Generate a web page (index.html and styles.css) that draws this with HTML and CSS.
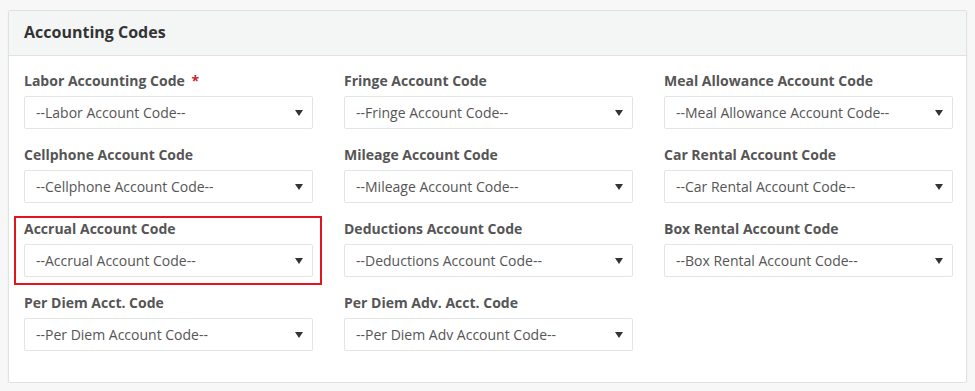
FILE: index.html
```html
<!DOCTYPE html>
<html lang="en">
<head>
    <meta charset="UTF-8">
    <meta name="viewport" content="width=device-width, initial-scale=1.0">
    <title>Accounting Codes</title>
    <link rel="stylesheet" href="styles.css">
</head>
<body>
    <div class="panel">
        <div class="panel-heading">
            <h3 class="panel-title">Accounting Codes</h3>
        </div>
        <div class="panel-body">
            <div class="form-grid">
                <div class="form-group">
                    <label>Labor Accounting Code <span class="required">*</span></label>
                    <div class="select-box"><select><option>--Labor Account Code--</option></select></div>
                </div>
                <div class="form-group">
                    <label>Fringe Account Code</label>
                    <div class="select-box"><select><option>--Fringe Account Code--</option></select></div>
                </div>
                <div class="form-group">
                    <label>Meal Allowance Account Code</label>
                    <div class="select-box"><select><option>--Meal Allowance Account Code--</option></select></div>
                </div>

                <div class="form-group">
                    <label>Cellphone Account Code</label>
                    <div class="select-box"><select><option>--Cellphone Account Code--</option></select></div>
                </div>
                <div class="form-group">
                    <label>Mileage Account Code</label>
                    <div class="select-box"><select><option>--Mileage Account Code--</option></select></div>
                </div>
                <div class="form-group">
                    <label>Car Rental Account Code</label>
                    <div class="select-box"><select><option>--Car Rental Account Code--</option></select></div>
                </div>

                <div class="form-group highlighted">
                    <label>Accrual Account Code</label>
                    <div class="select-box"><select><option>--Accrual Account Code--</option></select></div>
                </div>
                <div class="form-group">
                    <label>Deductions Account Code</label>
                    <div class="select-box"><select><option>--Deductions Account Code--</option></select></div>
                </div>
                <div class="form-group">
                    <label>Box Rental Account Code</label>
                    <div class="select-box"><select><option>--Box Rental Account Code--</option></select></div>
                </div>

                <div class="form-group">
                    <label>Per Diem Acct. Code</label>
                    <div class="select-box"><select><option>--Per Diem Account Code--</option></select></div>
                </div>
                <div class="form-group">
                    <label>Per Diem Adv. Acct. Code</label>
                    <div class="select-box"><select><option>--Per Diem Adv Account Code--</option></select></div>
                </div>
            </div>
        </div>
    </div>
</body>
</html>
```

FILE: styles.css
```css
body {
    font-family: 'Open Sans', 'Liberation Sans', sans-serif;
    margin: 0;
    padding: 10px 8px 0 8px;
    background-color: #f7f7f7;
    color: #555;
}
.panel {
    width: 959px;
    background-color: white;
    border: 1px solid #dde3e3;
    border-radius: 2px;
    box-shadow: 0 1px 2px rgba(0, 0, 0, 0.06);
    box-sizing: border-box;
}
.panel-heading {
    background-color: #f4f6f6;
    border-bottom: 1px solid #dde3e3;
    padding: 11px 15px 12px 15px;
    height: 45px;
    box-sizing: border-box;
}
.panel-title {
    margin: 0;
    font-size: 16px;
    font-weight: 700;
    line-height: 20px;
    color: #333;
}
.panel-body {
    padding: 15px 15px 15px 15px;
}
.form-grid {
    display: grid;
    grid-template-columns: repeat(3, 289px);
    column-gap: 31px;
}
.form-group {
    margin-bottom: 16px;
}
.form-group label {
    display: block;
    font-size: 14px;
    font-weight: 700;
    line-height: 20px;
    margin-bottom: 5px;
    color: #555;
}
.required {
    color: #c0282d;
    margin-left: 3px;
}
.select-box {
    position: relative;
}
.select-box select {
    width: 100%;
    height: 33px;
    padding: 0 30px 0 11px;
    font-family: 'Open Sans', 'Liberation Sans', sans-serif;
    font-size: 14px;
    color: #555;
    background-color: white;
    border: 1px solid #e2e5e5;
    border-radius: 2px;
    appearance: none;
    -webkit-appearance: none;
    outline: none;
}
.select-box::after {
    content: '';
    position: absolute;
    right: 10px;
    top: 14px;
    border-left: 4px solid transparent;
    border-right: 4px solid transparent;
    border-top: 6px solid #333;
    pointer-events: none;
}
.highlighted {
    position: relative;
}
.highlighted::before {
    content: '';
    position: absolute;
    left: -10px;
    right: -9px;
    top: -3px;
    bottom: -8px;
    border: 2px solid #e0161e;
    pointer-events: none;
}
```
